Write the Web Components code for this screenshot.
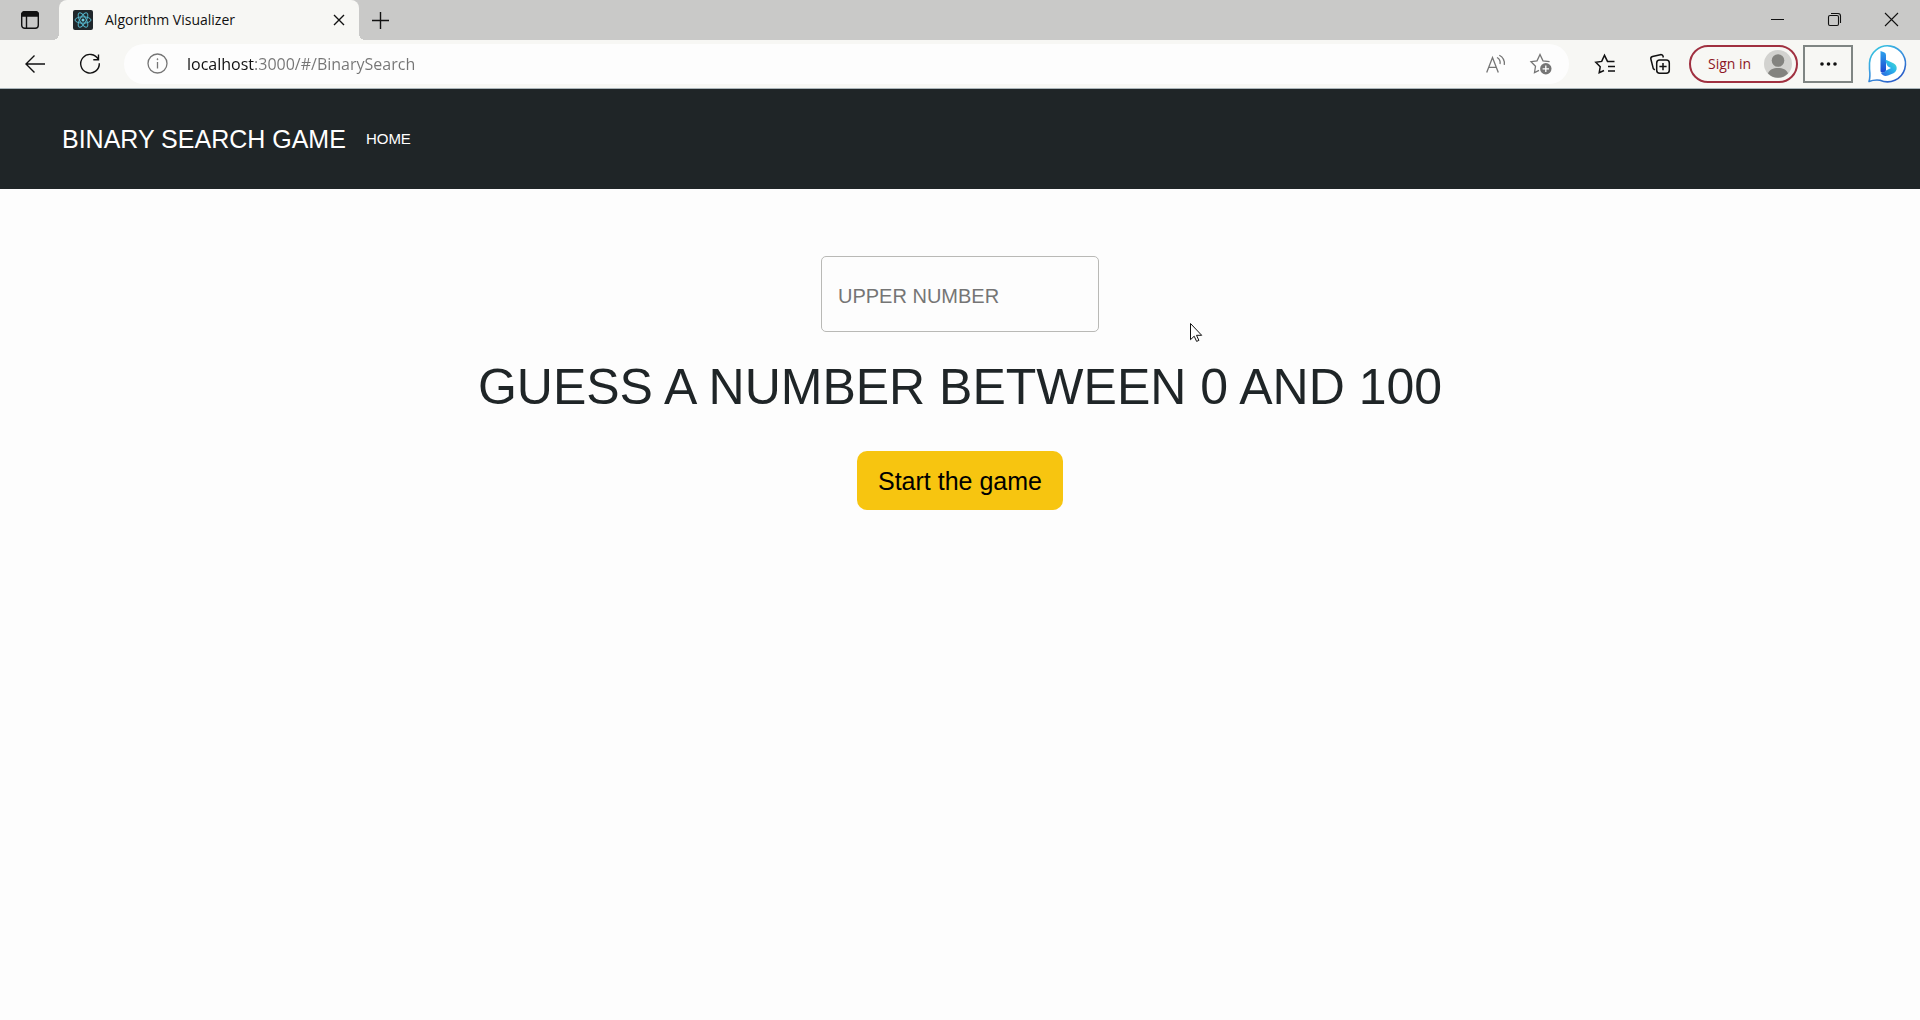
<!DOCTYPE html>
<html lang="en">
<head>
<meta charset="utf-8">
<title>Algorithm Visualizer</title>
<style>
  html, body { margin: 0; height: 100%; }
  body {
    background: #fdfdfd;
    font-family: "Liberation Sans", Arial, sans-serif;
    --strip: #c9c9c8;
    --chrome: #f7f7f4;
    --dark: #1f2527;
    --ui: "Open Sans", "Noto Sans", sans-serif;
  }
</style>
</head>
<body>
<browser-window>
  <tab-strip slot="tabs">Algorithm Visualizer</tab-strip>
  <tool-bar slot="tools"></tool-bar>
  <site-nav><span slot="brand">BINARY SEARCH GAME</span>HOME</site-nav>
  <search-game upper="100"></search-game>
</browser-window>

<script>
const define = (name, html) => customElements.define(name, class extends HTMLElement {
  constructor() {
    super();
    const t = document.createElement('template');
    t.innerHTML = html;
    this.attachShadow({ mode: 'open' }).append(t.content.cloneNode(true));
  }
  connectedCallback() {
    const limit = this.shadowRoot.querySelector('[data-upper]');
    if (limit) limit.textContent = this.getAttribute('upper');
  }
});

const reset = `
  :host, *, *::before, *::after { box-sizing: border-box; }
  button { appearance: none; border: 0; padding: 0; margin: 0; background: none; color: inherit; font: inherit;
           display: flex; align-items: center; justify-content: center; flex: none; }
  svg { display: block; flex: none; fill: none; overflow: visible; }
  svg:not([stroke]) { stroke: currentColor; }
`;

define('browser-window', `
  <style>
    :host { display: flex; flex-direction: column; min-height: 100%; }
  </style>
  <header><slot name="tabs"></slot><slot name="tools"></slot></header>
  <main><slot></slot></main>
`);

define('tab-strip', `
  <style>${reset}
    :host { display: flex; height: 40px; background: var(--strip); color: #111; font: 14px/20px var(--ui); }
    .actions { width: 59px; height: 40px; }
    .tab { position: relative; display: flex; align-items: center; width: 300px; padding: 0 14px; gap: 12px;
           background: var(--chrome); border-radius: 8px 8px 0 0; }
    .tab::before, .tab::after { content: ""; position: absolute; bottom: 0; width: 6px; height: 6px; }
    .tab::before { right: 100%; background: radial-gradient(circle at 0 0, transparent 6px, var(--chrome) 6px); }
    .tab::after { left: 100%; background: radial-gradient(circle at 100% 0, transparent 6px, var(--chrome) 6px); }
    .title { flex: 1; white-space: nowrap; }
    .new { width: 42px; }
    .controls { display: flex; margin-left: auto; }
    .controls button { width: 57px; height: 39px; }
  </style>
  <button class="actions" aria-label="Tab actions">
    <svg width="18" height="18" viewBox="0 0 18 18" stroke-width="1.4"><rect x=".7" y=".7" width="16.6" height="16.6" rx="3"/><path d="M.7 5V3.7a3 3 0 0 1 3-3h10.600a3 3 0 0 1 3 3V5z" fill="currentColor"/><path d="M5.500 5v12"/></svg>
  </button>
  <div class="tab">
    <svg width="20" height="20" viewBox="0 0 20 20" stroke="none"><rect width="20" height="20" rx="2" fill="#20272b"/><g fill="none" stroke="#55b6cb" stroke-width="1"><ellipse cx="10" cy="10" rx="8" ry="3.200"/><ellipse cx="10" cy="10" rx="8" ry="3.200" transform="rotate(60 10 10)"/><ellipse cx="10" cy="10" rx="8" ry="3.200" transform="rotate(120 10 10)"/></g><circle cx="10" cy="10" r="1.500" fill="#6fd0e0"/></svg>
    <span class="title"><slot></slot></span>
    <button aria-label="Close tab"><svg width="12" height="10" viewBox="0 0 12 10" stroke-width="1.400"><path d="M1 0l10 10M11 0L1 10"/></svg></button>
  </div>
  <button class="new" aria-label="New tab"><svg width="17" height="17" viewBox="0 0 17 17" stroke-width="1.400"><path d="M8.500 0v17M0 8.500h17"/></svg></button>
  <div class="controls">
    <button aria-label="Minimize"><svg width="13" height="13" viewBox="0 0 13 13"><path d="M0 6.500h13"/></svg></button>
    <button aria-label="Restore"><svg width="13" height="13" viewBox="0 0 13 13" stroke-width="1.100"><rect x=".5" y="2.500" width="10" height="10" rx="1.500"/><path d="M3 .5h7a2.500 2.500 0 0 1 2.500 2.500v7"/></svg></button>
    <button aria-label="Close window"><svg width="13" height="13" viewBox="0 0 13 13" stroke-width="1.100"><path d="M0 0l13 13M13 0L0 13"/></svg></button>
  </div>
`);

define('tool-bar', `
  <style>${reset}
    :host { display: flex; align-items: center; height: 49px; padding: 0 14px 1px 7px; background: var(--chrome);
            border-bottom: 1px solid #a9b4b9; color: #111; }
    .nav { width: 55px; height: 40px; }
    .address { flex: 1; display: flex; align-items: center; height: 40px; margin-left: 7px; padding: 0 6px 0 23px;
               gap: 19px; background: #fdfdfd; border-radius: 20px; color: #757575; }
    .url { flex: 1; min-width: 0; height: 24px; margin: 0; padding: 0; border: 0; font: 16px/24px var(--ui);
           color: #757575; -webkit-text-fill-color: transparent;
           background: linear-gradient(90deg, #111 68px, #757575 68px); -webkit-background-clip: text; background-clip: text; }
    .inbar { display: flex; }
    .inbar button { width: 45px; height: 40px; }
    .tool { width: 55px; height: 40px; }
    .right { display: flex; align-items: center; padding-left: 8px; }
    .signin { width: 109px; height: 38px; margin-left: 2px; padding: 0 4px 0 17px; justify-content: space-between;
              border: 2px solid #a03040; border-radius: 19px; color: #8d1625; font: 14px/20px var(--ui); }
    .more { width: 50px; height: 38px; margin: 0 15px 0 5px; border: 2px solid #7f8583; }
  </style>
  <button class="nav" aria-label="Back"><svg width="20" height="18" viewBox="0 0 20 18" stroke-width="1.400"><path d="M20 9H1M9.500 .5L1 9l8.500 8.500"/></svg></button>
  <button class="nav" aria-label="Refresh"><svg width="20" height="20" viewBox="0 0 20 20" stroke-width="1.400"><path d="M18.300 5.500A9.300 9.300 0 1 0 19.300 9.200M18.500 .5v5.200h-5.200"/></svg></button>
  <div class="address">
    <svg width="21" height="21" viewBox="0 0 21 21" stroke-width="1.300"><circle cx="10.500" cy="10.500" r="9.500"/><path d="M10.500 9v6.500"/><circle cx="10.500" cy="6.200" r=".6" fill="currentColor" stroke-width=".6"/></svg>
    <input class="url" type="text" aria-label="Address" value="localhost:3000/#/BinarySearch" spellcheck="false">
    <div class="inbar">
      <button aria-label="Read aloud"><svg width="20" height="18" viewBox="0 0 20 18" stroke-width="1.300"><path d="M.7 17.500L6.500 2.500l5.800 15M2.600 12.300h7.800M11 2.500a6 6 0 0 1 3 6.500M13.300 .3a9.500 9.500 0 0 1 5 9.500"/></svg></button>
      <button aria-label="Add to favorites"><svg width="22" height="22" viewBox="0 0 22 22" stroke-width="1.300"><path d="M9 17.300L4.500 19.500l1-6.200L1 8.700l6-.9L10 1.500l3 6.300 6.600 .9"/><circle cx="15.800" cy="15.800" r="5.700" fill="currentColor" stroke="none"/><path d="M15.800 12.600v6.400M12.600 15.800h6.400" stroke="#fff"/></svg></button>
    </div>
  </div>
  <div class="right">
    <button class="tool" aria-label="Favorites"><svg width="20" height="20" viewBox="0 0 20 20" stroke-width="1.500"><path d="M9 16.500l-4.800 2.300 1-6L.8 8.300l5.900-.9L9.500 1.300l3 6.100h7M13 12.500h7M13 17h7"/></svg></button>
    <button class="tool" aria-label="Collections"><svg width="20" height="20" viewBox="0 0 20 20" stroke-width="1.500"><rect x="6.700" y="6" width="12.600" height="13.200" rx="3"/><path d="M13 9v7.200M9.400 12.600h7.200M4.800 16L3.300 14.600 .9 5.300A2.300 2.300 0 0 1 2.500 2.500L10.300 .7a2.300 2.300 0 0 1 2.800 1.700L13.300 3.500"/></svg></button>
    <button class="signin">Sign in
      <svg width="28" height="28" viewBox="0 0 28 28" stroke="none"><circle cx="14" cy="14" r="14" fill="#d2d2cf"/><circle cx="14" cy="10.500" r="6.300" fill="#83837f"/><path d="M4 23.500C5.500 19.500 9 18 14 18s8.500 1.500 10 5.500A14 14 0 0 1 4 23.500z" fill="#83837f"/></svg>
    </button>
    <button class="more" aria-label="Settings and more"><svg width="17" height="4" viewBox="0 0 17 4" stroke="none"><g fill="#111"><circle cx="2" cy="2" r="1.800"/><circle cx="8.500" cy="2" r="1.800"/><circle cx="15" cy="2" r="1.800"/></g></svg></button>
    <button aria-label="Bing chat"><svg width="38" height="39" viewBox="0 0 38 39">
      <defs>
        <linearGradient id="ring" x1="0" y1="0" x2=".7" y2="1"><stop offset="0" stop-color="#35cfe0"/><stop offset=".5" stop-color="#3a9be0"/><stop offset="1" stop-color="#2a5cc8"/></linearGradient>
        <linearGradient id="stem" x1="0" y1="0" x2="0" y2="1"><stop offset="0" stop-color="#2fa4ee"/><stop offset="1" stop-color="#1c46cf"/></linearGradient>
        <linearGradient id="bowl" x1="0" y1="1" x2="1" y2="0"><stop offset="0" stop-color="#2a62e0"/><stop offset=".6" stop-color="#2bb7ea"/><stop offset="1" stop-color="#4be0c8"/></linearGradient>
      </defs>
      <path d="M1 37.500Q2.500 33 1.500 25V19A18 18 0 1 1 12 36.200Q6 35.500 1 37.500z" fill="#fff" stroke="url(#ring)" stroke-width="1.600" stroke-linejoin="round"/>
      <path d="M12.500 7l3.500 1.200q2 .8 2 2.800v15.500q-2.500 4-5.500 1z" fill="url(#stem)" stroke="none"/>
      <path d="M12.700 28.500q2.800 1 5.300-2l5-2.500-2.500-1.200q-1-.5-1.500-1.800l-1.300-3.500q-.4-1.800 1.300-1.300l6.500 3q4 2.300 3 6.500-.8 2.300-3 3.500L20 31.500q-5 1.500-7.300-3z" fill="url(#bowl)" stroke="none"/>
    </svg></button>
  </div>
`);

define('site-nav', `
  <style>
    :host { display: block; background: var(--dark); color: #fff; }
    nav { display: flex; align-items: center; gap: 20px; height: 100px; padding: 0 62px; }
    a { color: inherit; text-decoration: none; }
    .brand { font-size: 25px; line-height: 38px; }
    .link { font-size: 15px; line-height: 24px; }
  </style>
  <nav><a class="brand" href="#/"><slot name="brand"></slot></a><a class="link" href="#/"><slot></slot></a></nav>
`);

define('search-game', `
  <style>${reset}
    :host { display: block; position: relative; }
    form { display: flex; flex-direction: column; align-items: center; padding-top: 67px; }
    input { appearance: none; width: 278px; height: 76px; margin: 0; padding: 5px 16px 0; border: 1px solid #b9b9b6;
            border-radius: 5px; background: transparent; color: #212529; font: 20px/28px "Liberation Sans", Arial, sans-serif; }
    input::placeholder { color: #757575; opacity: 1; }
    h1 { margin: 25px 0 34px; font-weight: 400; font-size: 50px; line-height: 60px; color: var(--dark); text-align: center; }
    button { height: 59px; padding: 0 21px; border-radius: 10px; background: #f7c510; color: #000; font-size: 25px; line-height: 38px; }
    .pointer { position: absolute; left: 62%; top: 134px; }
  </style>
  <form>
    <input type="text" placeholder="UPPER NUMBER" aria-label="Upper number">
    <h1>GUESS A NUMBER BETWEEN 0 AND <span data-upper></span></h1>
    <button type="button">Start the game</button>
  </form>
  <svg class="pointer" width="12" height="19" viewBox="0 0 12 19"><path d="M.5 .5v16.200l3.700-3.500 2.400 5.200 2.300-1-2.400-5.100h5.200z" fill="#fff" stroke="#111"/></svg>
`);
</script>
</body>
</html>
